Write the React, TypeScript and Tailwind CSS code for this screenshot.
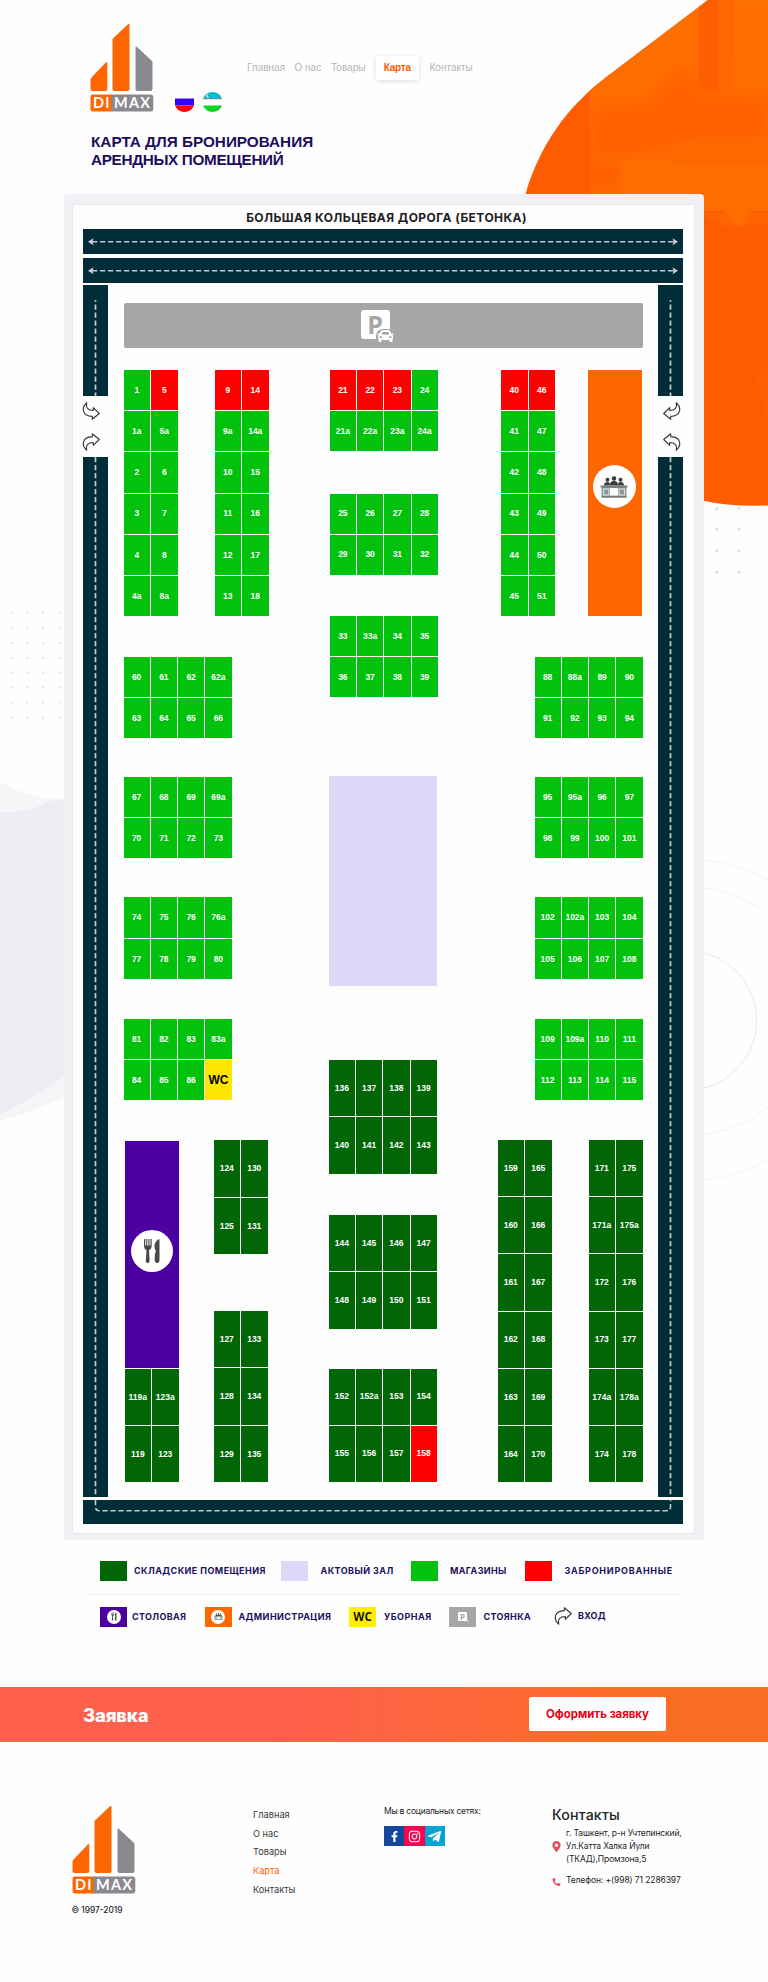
import React from "react";
import { FaFacebookF, FaInstagram, FaTelegramPlane, FaMapMarkerAlt, FaPhoneAlt, FaCar } from "react-icons/fa";

const SHOP = "bg-[#00c20d]";
const STORE = "bg-[#006606]";
const BOOKED = "bg-[#ff0000]";
const booked = new Set(["5", "9", "14", "21", "22", "23", "40", "46", "158"]);

function Block({ rows, tone, className }: { rows: string[]; tone: "shop" | "store"; className: string }) {
  return (
    <div className={`flex flex-col gap-px ${className}`}>
      {rows.map((row) => (
        <div key={row} className="flex min-h-0 flex-1 gap-px">
          {row.split(" ").map((id) => (
            <div
              key={id}
              className={`flex min-w-0 flex-1 items-center justify-center whitespace-nowrap font-bold leading-none ${
                id === "WC"
                  ? "bg-[#ffe600] text-[12px] text-black"
                  : `text-[8.5px] text-white ${booked.has(id) ? BOOKED : tone === "shop" ? SHOP : STORE}`
              }`}
            >
              {id}
            </div>
          ))}
        </div>
      ))}
    </div>
  );
}

function Logo() {
  return (
    <svg className="block h-[89px] w-[64px] shrink-0" viewBox="0 0 64 89">
      <path d="M2 54 16 39.3Q17.3 38.3 17.3 40V66Q17.3 68 15.3 68H2.5Q.5 68 .5 66V56.500Q.5 55.500 2 54Z" fill="#ff6600" />
      <path d="M24 14.500 38 1.300Q39.500 .5 39.500 2V66Q39.500 68 37.500 68H24.500Q22.500 68 22.500 66V16.500Q22.500 15.500 24 14.500Z" fill="#ff6600" />
      <path d="M45.500 24.500Q45.500 23 47 24L61.500 37.500Q62.500 38.500 62.500 39.500V66Q62.500 68 60.500 68H47.500Q45.500 68 45.500 66Z" fill="#8b8890" />
      <path d="M21 71.500H61Q63.300 71.500 63.300 74V86Q63.300 88.500 61 88.500H21Z" fill="#8b8890" />
      <path d="M3 71.500H21.500V88.500H3Q.5 88.500 .5 86V74Q.5 71.500 3 71.500Z" fill="#ff6600" />
      <text x="3" y="85" fontFamily="Lato" fontSize="14.500" fontWeight="700" fill="#fff" textLength="16.500">DI</text>
      <text x="24" y="85" fontFamily="Lato" fontSize="14.500" fontWeight="700" fill="#fff" textLength="36">MAX</text>
    </svg>
  );
}

function Turn({ className = "" }: { className?: string }) {
  return (
    <svg className={`block h-[18px] w-[18px] shrink-0 ${className}`} viewBox="0 0 18 18">
      <path
        d="M4.800 17.300C-.8 12.500-.2 4 10.300 3.600L10.300.8 17.300 6.500 11.300 12.300V9.500C6.500 9.500 3.400 11.800 4.800 17.300Z"
        fill="none" stroke="#32323c" strokeWidth="1.100" strokeLinejoin="round"
      />
    </svg>
  );
}

function People({ className }: { className: string }) {
  return (
    <svg className={`block ${className}`} viewBox="0 0 28 22">
      <g fill="#3c3c3c">
        <circle cx="7.500" cy="3.700" r="2" /><circle cx="14" cy="2.500" r="2.300" /><circle cx="20.500" cy="3.700" r="2" />
        <path d="M4 9.500C4 7 5.500 6 7.500 6S10 7 10 9.500ZM10 9.500C10 6 11.500 5 14 5S18 6 18 9.500ZM18 9.500C18 7 18.500 6 20.500 6S24 7 24 9.500Z" />
      </g>
      <path d="M.5 9.500H27.500V11.500H.5ZM1.500 20H26.500V21.800H1.500Z" fill="#77807f" />
      <path d="M2 11.500H26V20.500H2Z" fill="#9aa3a3" stroke="#69706f" strokeWidth=".7" />
      <path d="M3 12.500H9.300V19.500H3ZM18.700 12.500H25V19.500H18.700Z" fill="#dfe4e4" />
      <path d="M10 12H18V19.500H10Z" fill="#fff" />
      <path d="M4 13.500H8.500V18.500H4ZM19.500 13.500H24V18.500H19.500Z" fill="#8b9a9d" />
    </svg>
  );
}

function Cutlery({ className }: { className: string }) {
  return (
    <svg className={`block ${className}`} viewBox="0 0 18 26">
      <path d="M1 1V8Q1 11 3.500 12L2.800 23Q3 25 4.700 25T6.600 23L6 12Q8.700 11 8.700 8V1H7.500V7.500H6.500V1H5.400V7.500H4.300V1H3.200V7.500H2.200V1Z" fill="#454947" />
      <path d="M16.500 1Q12 2.500 11.500 8 11.400 10.500 13 13 11.500 15 11.700 22.500 12 25 14.200 25T16.500 22.500Z" fill="#454947" />
    </svg>
  );
}

function Parking({ small = false }: { small?: boolean }) {
  return small ? (
    <span className="relative flex h-[9px] w-[9px] items-center justify-center rounded-[1px] bg-white font-['Open_Sans'] text-[8px] font-bold leading-none text-[#a6a6a6]">
      P<FaCar className="absolute -bottom-[1px] -right-[2px] h-[4px] w-[6px] text-white" />
    </span>
  ) : (
    <span className="relative mr-[4px] mb-[3px] flex h-[29px] w-[29px] items-center justify-center rounded-[3px] bg-white font-['Open_Sans'] text-[25px] font-bold leading-none text-[#a6a6a6]">
      P
      <span className="absolute -bottom-[5px] -right-[5px] flex h-[15px] w-[19px] items-center justify-center rounded-t-[7px] bg-[#a6a6a6]">
        <FaCar className="h-[16px] w-[17px] text-white" />
      </span>
    </span>
  );
}

function Highway() {
  return (
    <div className="h-[25px] w-[600px] shrink-0 bg-[#002d38]">
      <svg className="block h-[25px] w-[600px]" viewBox="0 0 600 25">
        <path d="M9 12.700H590" stroke="#b9cdd1" strokeWidth="1.600" strokeDasharray="5.300 2.700" />
        <path d="M5 12.700 10.500 9.200 9.500 12.700 10.500 16.200ZM595 12.700 589.500 9.200 590.500 12.700 589.500 16.200Z" fill="#c4d3d6" />
      </svg>
    </div>
  );
}

function SideRoad({ right = false }: { right?: boolean }) {
  return (
    <div className="flex w-[25px] shrink-0 flex-col">
      <div className="flex h-[111px] justify-center bg-[#002d38]">
        <svg className="block h-[111px] w-[3px]" viewBox="0 0 3 111">
          <path d="M1.500 15V111" stroke="#c4ced0" strokeWidth="1.700" strokeDasharray="5.300 2.700" strokeDashoffset="3.500" />
        </svg>
      </div>
      <div className={`flex h-[61px] flex-col justify-center gap-[13px] ${right ? "items-end pr-[2px]" : "-ml-px items-start"}`}>
        <Turn className={right ? "-scale-x-100 -scale-y-100" : "-scale-y-100"} />
        <Turn className={right ? "-scale-x-100" : ""} />
      </div>
      <div className="flex h-[1040px] justify-center bg-[#002d38]">
        <svg className="block h-[1040px] w-[3px]" viewBox="0 0 3 1040">
          <path d="M1.500 0V1040" stroke="#c4ced0" strokeWidth="1.700" strokeDasharray="5.300 2.700" />
        </svg>
      </div>
    </div>
  );
}

function Backdrop() {
  const dots = (xs: number[], ys: number[], r: number) =>
    xs.flatMap((x) => ys.map((y) => <circle key={`${x}-${y}`} cx={x} cy={y} r={r} fill="#dfdfe3" />));
  return (
    <svg className="absolute left-0 top-0 h-[1240px] w-[768px]" viewBox="0 0 768 1240">
      <defs>
        <clipPath id="blob">
          <path d="M708 0 605 78C566 108 540 145 525.500 194 500 300 540 470 704 500.700Q728 506.500 768 505.500V0Z" />
        </clipPath>
        <linearGradient id="fall" x1="0" y1="0" x2="0" y2="1">
          <stop offset="0" stopColor="#ff7000" /><stop offset="1" stopColor="#ff6600" />
        </linearGradient>
        <filter id="soften"><feGaussianBlur stdDeviation="4" /></filter>
      </defs>
      <g clipPath="url(#blob)">
        <rect width="768" height="520" fill="#ff5b00" />
        <rect x="590" width="178" height="211" fill="url(#fall)" />
        <rect x="699" width="20" height="92" fill="#ff5e00" />
        <rect x="719" width="15" height="90" fill="#ff6700" />
        <g filter="url(#soften)">
          <path d="M594 106 650 102 665 78 690 68 700 92 768 96V138L690 140 640 152 594 158Z" fill="#ff6400" />
          <path d="M594 133 620 118 680 112 760 108 768 130 700 136 640 148 594 150Z" fill="#ff6000" opacity=".7" />
          <rect x="592" y="164" width="28" height="20" fill="#ff6000" />
        </g>
        <path d="M621 161 768 164V211H621Z" fill="#ff6c00" />
        <path d="M704 213Q716 228 735 227 755 222 768 225V213Z" fill="#ff6400" />
        <path d="M725 211H752L742 226H736Z" fill="#ff6c00" />
        <path d="M756 376 768 366V420Z" fill="#ff6000" />
      </g>
      {dots([716.700, 739], [508.700, 529.300, 551, 572.300], 1.600)}
      {dots([12.300, 27.300, 43, 59.500], [612.700, 627.700, 643, 658, 672.300, 687.300, 702.700, 717.700], 1.100)}
      <path d="M0 782Q30 799 64 800V1097Q35 1111 0 1121Z" fill="#f6f6f9" />
      <path d="M0 812Q25 813 41 805T64 800V1077Q35 1097 0 1115Z" fill="#eeedf2" />
      <g fill="none" strokeWidth=".9">
        <circle cx="687" cy="1020.500" r="69.600" stroke="#e9e2f1" />
        <circle cx="690" cy="1011" r="124" stroke="#f0eff5" />
        <circle cx="689" cy="1020" r="160.500" stroke="#f3f2f6" />
      </g>
    </svg>
  );
}

const label = "whitespace-nowrap font-['Inter'] font-bold leading-none text-[#20105e]";

export default function App() {
  return (
    <div className="relative flex h-[1982px] w-[768px] flex-col overflow-hidden bg-[#fefefe] font-['Liberation_Sans',sans-serif]">
      <Backdrop />

      <header className="relative flex h-[112px] items-end pl-[90px]">
        <Logo />
        <div className="ml-[21px] flex h-[112px] items-end gap-[9px]">
          <svg className="block h-[20px] w-[19px]" viewBox="0 0 19 20">
            <path d="M0 6.500H19V13.500H0Z" fill="#3600f5" />
            <path d="M0 13.500H19Q16.500 20 9.500 20T0 13.500Z" fill="#ff0008" />
          </svg>
          <svg className="block h-[20px] w-[19px]" viewBox="0 0 19 20">
            <path d="M0 7Q2.500 0 9.500 0T19 7Z" fill="#00b8c8" />
            <path d="M0 7H19" stroke="#a77480" strokeWidth=".9" />
            <circle cx="5" cy="4" r="1.700" fill="#fff" /><circle cx="5.900" cy="3.700" r="1.400" fill="#00b8c8" />
            <path d="M8 3H14M8 5H15" stroke="#7fe1e8" strokeWidth=".6" strokeDasharray=".8 1" />
            <path d="M0 7.500H19V13.500H0Z" fill="#fff" />
            <path d="M0 13.500H19Q16.500 20 9.500 20T0 13.500Z" fill="#0bd422" />
          </svg>
        </div>
        <nav className="mb-[32px] ml-[25px] flex h-[24px] items-center whitespace-nowrap text-[10px] leading-none text-[#b5b5b5]">
          <a className="w-[47.500px]">Главная</a>
          <a className="w-[36.500px]">О нас</a>
          <a className="w-[44.500px]">Товары</a>
          <a className="flex h-[24px] w-[43.500px] items-center justify-center rounded-[2px] bg-white font-bold tracking-[-0.200px] text-[#ff5a00] shadow-[0_1px_5px_rgba(0,0,0,0.14)]">Карта</a>
          <a className="ml-[10.500px]">Контакты</a>
        </nav>
      </header>

      <h1 className="relative mt-[21px] ml-[91px] h-[61px] whitespace-nowrap text-[15.300px] font-bold leading-[17.500px] text-[#1d0d5c]">
        КАРТА ДЛЯ БРОНИРОВАНИЯ<br /><span className="tracking-[-0.340px]">АРЕНДНЫХ ПОМЕЩЕНИЙ</span>
      </h1>

      <main className="relative ml-[64px] h-[1346px] w-[640px] shrink-0 rounded-[4px] bg-[#f2f0f5] pt-[9.500px] pl-[8px]">
        <div className="flex h-[1330px] w-[622.500px] flex-col rounded-[2px] border border-[#e8e6ea] bg-[#fefefe] pl-[10px]">
          <h2 className="flex h-[24.500px] w-[600px] items-center justify-center whitespace-nowrap pt-[2px] pl-[7px] font-['Inter'] text-[12px] font-bold leading-none tracking-[0.430px] text-[#20201f]">
            БОЛЬШАЯ КОЛЬЦЕВАЯ ДОРОГА (БЕТОНКА)
          </h2>
          <Highway />
          <div className="h-[4px] shrink-0" />
          <Highway />
          <div className="mt-[2px] flex w-[600px] justify-between">
            <SideRoad />
            <div className="flex w-[519px] flex-col pt-[18px]">
              <div className="flex h-[45px] shrink-0 items-center justify-center rounded-[2px] bg-[#a6a6a6] pr-[12px]">
                <Parking />
              </div>
              <div className="mt-[22px] flex justify-between">
                <div className="flex w-[145px] flex-col">
                  <div className="flex gap-[37px]">
                    <Block tone="shop" className="h-[246px] w-[54px]" rows={["1 5", "1a 5a", "2 6", "3 7", "4 8", "4a 8a"]} />
                    <Block tone="shop" className="h-[246px] w-[54px]" rows={["9 14", "9a 14a", "10 15", "11 16", "12 17", "13 18"]} />
                  </div>
                  <Block tone="shop" className="mt-[41px] h-[81px] w-[108px]" rows={["60 61 62 62a", "63 64 65 66"]} />
                  <Block tone="shop" className="mt-[39px] h-[81px] w-[108px]" rows={["67 68 69 69a", "70 71 72 73"]} />
                  <Block tone="shop" className="mt-[39px] h-[82px] w-[108px]" rows={["74 75 76 76a", "77 78 79 80"]} />
                  <Block tone="shop" className="mt-[40px] h-[81px] w-[108px]" rows={["81 82 83 83a", "84 85 86 WC"]} />
                  <div className="mt-[40px] flex w-[144px] justify-between">
                    <div className="ml-[1px] flex w-[54px] flex-col pt-px">
                      <div className="flex h-[227px] items-center justify-center bg-[#4c009f]">
                        <span className="mb-[7px] flex h-[42px] w-[42px] items-center justify-center rounded-full bg-white">
                          <Cutlery className="h-[26px] w-[18px]" />
                        </span>
                      </div>
                      <Block tone="store" className="mt-px h-[113px] w-[54px]" rows={["119a 123a", "119 123"]} />
                    </div>
                    <div className="flex flex-col justify-between">
                      <Block tone="store" className="h-[114px] w-[54px]" rows={["124 130", "125 131"]} />
                      <Block tone="store" className="h-[171px] w-[54px]" rows={["127 133", "128 134", "129 135"]} />
                    </div>
                  </div>
                </div>

                <div className="ml-[2px] flex w-[110px] flex-col">
                  <Block tone="shop" className="ml-px h-[81px] w-[108px]" rows={["21 22 23 24", "21a 22a 23a 24a"]} />
                  <Block tone="shop" className="mt-[42.500px] ml-px h-[81px] w-[108px]" rows={["25 26 27 28", "29 30 31 32"]} />
                  <Block tone="shop" className="mt-[41.500px] ml-px h-[81px] w-[108px]" rows={["33 33a 34 35", "36 37 38 39"]} />
                  <div className="mt-[79px] h-[210px] w-[108px] bg-[#dcd8f7]" />
                  <Block tone="store" className="mt-[74px] h-[113.500px] w-[108px]" rows={["136 137 138 139", "140 141 142 143"]} />
                  <Block tone="store" className="mt-[41.500px] h-[113.500px] w-[108px]" rows={["144 145 146 147", "148 149 150 151"]} />
                  <Block tone="store" className="mt-[40px] h-[113px] w-[108px]" rows={["152 152a 153 154", "155 156 157 158"]} />
                </div>

                <div className="flex w-[145.500px] flex-col items-end">
                  <div className="ml-[4px] flex w-[141.500px] justify-between self-start">
                    <Block tone="shop" className="h-[246px] w-[54px]" rows={["40 46", "41 47", "42 48", "43 49", "44 50", "45 51"]} />
                    <div className="mr-[1px] flex h-[246px] w-[53.500px] items-center justify-center bg-[#ff6600]">
                      <span className="mt-[-13px] mr-[1px] flex h-[43px] w-[43px] items-center justify-center rounded-full bg-white">
                        <People className="h-[22px] w-[28px]" />
                      </span>
                    </div>
                  </div>
                  <Block tone="shop" className="mt-[41px] h-[81px] w-[108px]" rows={["88 88a 89 90", "91 92 93 94"]} />
                  <Block tone="shop" className="mt-[39px] h-[81px] w-[108px]" rows={["95 95a 96 97", "98 99 100 101"]} />
                  <Block tone="shop" className="mt-[39px] h-[82px] w-[108px]" rows={["102 102a 103 104", "105 106 107 108"]} />
                  <Block tone="shop" className="mt-[40px] h-[81px] w-[108px]" rows={["109 109a 110 111", "112 113 114 115"]} />
                  <div className="mt-[40px] flex w-full justify-between pl-[0.500px]">
                    <Block tone="store" className="h-[342px] w-[54px]" rows={["159 165", "160 166", "161 167", "162 168", "163 169", "164 170"]} />
                    <Block tone="store" className="h-[342px] w-[54px]" rows={["171 175", "171a 175a", "172 176", "173 177", "174a 178a", "174 178"]} />
                  </div>
                </div>
              </div>
            </div>
            <SideRoad right />
          </div>
          <div className="mt-[3px] h-[24px] w-[600px] shrink-0 bg-[#002d38]">
            <svg className="block h-[24px] w-[600px]" viewBox="0 0 600 24">
              <path d="M12.500 0V7Q12.500 10.700 16.500 10.700H583.500Q587.500 10.700 587.500 7V0" fill="none" stroke="#c4ced0" strokeWidth="1.600" strokeDasharray="5.300 2.700" />
            </svg>
          </div>
        </div>
      </main>

      <section className="relative ml-[86px] w-[595px] shrink-0">
        <div className="flex h-[55px] items-center border-b border-[#ececef] pt-[7px] pl-[14px] text-[9px]">
          <i className={`h-[20px] w-[27px] ${STORE}`} />
          <span className={`${label} ml-[7px] w-[147px] tracking-[0.430px]`}>СКЛАДСКИЕ ПОМЕЩЕНИЯ</span>
          <i className="h-[20px] w-[27px] bg-[#dcd8f7]" />
          <span className={`${label} ml-[12.500px] w-[90.500px] tracking-[0.430px]`}>АКТОВЫЙ ЗАЛ</span>
          <i className={`h-[20px] w-[27px] ${SHOP}`} />
          <span className={`${label} ml-[12px] w-[75px] tracking-[0.350px]`}>МАГАЗИНЫ</span>
          <i className={`h-[20px] w-[27px] ${BOOKED}`} />
          <span className={`${label} ml-[12.500px] tracking-[0.750px]`}>ЗАБРОНИРОВАННЫЕ</span>
        </div>
        <div className="flex h-[43px] items-center pl-[14px] text-[9px]">
          <i className="flex h-[20px] w-[27px] items-center justify-center bg-[#4c009f]">
            <span className="flex h-[14px] w-[14px] items-center justify-center rounded-full bg-white"><Cutlery className="h-[9px] w-[6px]" /></span>
          </i>
          <span className={`${label} ml-[5px] w-[72.500px] tracking-[0.350px]`}>СТОЛОВАЯ</span>
          <i className="flex h-[20px] w-[27px] items-center justify-center bg-[#ff6600]">
            <span className="flex h-[14px] w-[14px] items-center justify-center rounded-full bg-white"><People className="h-[7px] w-[9px]" /></span>
          </i>
          <span className={`${label} ml-[7px] w-[110.500px] tracking-[0.400px]`}>АДМИНИСТРАЦИЯ</span>
          <b className="flex h-[20px] w-[27px] items-center justify-center bg-[#ffee00] font-['Open_Sans'] text-[11.500px] leading-none text-[#151515]">WC</b>
          <span className={`${label} ml-[8px] w-[65px] tracking-[0.480px]`}>УБОРНАЯ</span>
          <b className="flex h-[20px] w-[27px] items-center justify-center bg-[#a6a6a6]"><Parking small /></b>
          <span className={`${label} ml-[7.500px] w-[70px] tracking-[0.350px]`}>СТОЯНКА</span>
          <Turn className="mb-[2px]" />
          <span className={`${label} mb-[3px] ml-[6.500px] tracking-[0.220px]`}>ВХОД</span>
        </div>
      </section>

      <section className="relative mt-[48.500px] flex h-[55px] shrink-0 items-center justify-between bg-linear-to-r from-[#ff5f4d] from-35% to-[#fb6c24] to-80% pl-[83px] pr-[102px] font-['Inter']">
        <h3 className="pt-[2px] text-[18.500px] font-extrabold leading-none tracking-[-0.200px] text-white">Заявка</h3>
        <button className="flex h-[34px] w-[137px] items-center justify-center whitespace-nowrap rounded-[2px] bg-white pt-px text-[11.400px] font-bold leading-none text-[#e60010]">
          Оформить заявку
        </button>
      </section>

      <footer className="relative flex shrink-0 items-start whitespace-nowrap pt-[63.500px] pl-[71.500px] font-['Inter'] text-[#212529]">
        <div className="flex w-[181.500px] flex-col">
          <Logo />
          <p className="mt-[10px] text-[8.300px] font-medium leading-[12px]">© 1997-2019</p>
        </div>
        <ul className="w-[131px] pt-[1px] text-[9.200px] leading-[18.700px] text-[#3a3a3a]">
          <li>Главная</li>
          <li>О нас</li>
          <li>Товары</li>
          <li className="text-[#ff5a00]">Карта</li>
          <li>Контакты</li>
        </ul>
        <div className="w-[168px]">
          <p className="text-[8.500px] leading-[13px] tracking-[-0.240px]">Мы в социальных сетях:</p>
          <div className="mt-[8px] flex text-white">
            <span className="flex h-[20px] w-[20.300px] items-center justify-center bg-[#14489c]"><FaFacebookF className="h-[11px] w-[11px]" /></span>
            <span className="flex h-[20px] w-[20.300px] items-center justify-center bg-[#f50752]"><FaInstagram className="h-[13px] w-[13px]" /></span>
            <span className="flex h-[20px] w-[20.300px] items-center justify-center bg-[#06a3d8]"><FaTelegramPlane className="h-[15px] w-[15px]" /></span>
          </div>
        </div>
        <div>
          <h4 className="pt-px text-[14.200px] font-medium leading-[18px] tracking-[0.150px]">Контакты</h4>
          <div className="mt-[3px] flex items-center">
            <FaMapMarkerAlt className="mr-[5px] h-[11px] w-[9px] text-[#ef4a55]" />
            <p className="text-[8.500px] leading-[13px] tracking-[-0.130px]">г. Ташкент, р-н Учтепинский,<br />Ул.Катта Халка Йули<br />(ТКАД),Промзона,5</p>
          </div>
          <div className="mt-[8px] flex items-center">
            <FaPhoneAlt className="mr-[5px] mt-[3px] h-[8px] w-[9px] text-[#ef4a55]" />
            <p className="text-[8.500px] leading-[13px] tracking-[-0.100px]">Телефон: +(998) 71 2286397</p>
          </div>
        </div>
      </footer>
    </div>
  );
}
